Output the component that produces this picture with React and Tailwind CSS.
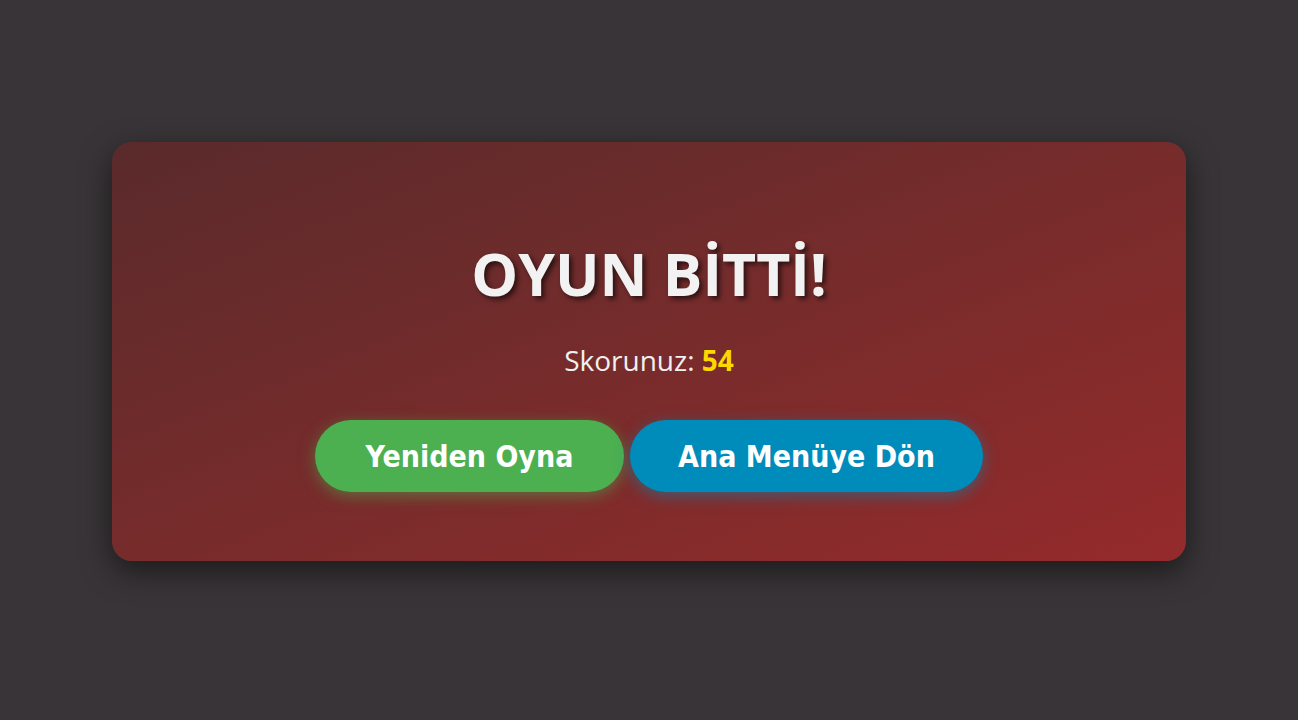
export default function App() {
  return (
    <div className="flex h-[720px] w-full justify-center bg-[#383437] pt-[142px] font-['Open_Sans',sans-serif]">
      <div className="flex h-[419px] w-[1074px] flex-col items-center rounded-[20px] bg-gradient-to-br from-[#5a2a2b] to-[#952a2b] pt-[102px] shadow-[0_10px_30px_rgba(0,0,0,0.5)]">
        <h1 className="text-[59px] font-bold leading-none text-[#f2f2f2] [text-shadow:3px_3px_5px_rgba(0,0,0,0.6)]">
          OYUN BİTTİ!
        </h1>
        <p className="mt-[43px] text-[28px] leading-none text-[#f0f0f0]">
          Skorunuz: <span className="font-bold text-[#ffd700]">54</span>
        </p>
        <div className="mt-[46px] flex gap-[6px] font-['DejaVu_Sans_Condensed','DejaVu_Sans',sans-serif]">
          <button className="h-[72px] w-[309px] rounded-full bg-[#4caf50] text-[30px] font-bold text-white shadow-[0_4px_15px_rgba(76,175,80,0.5)]">
            Yeniden Oyna
          </button>
          <button className="h-[72px] w-[353px] rounded-full bg-[#008cba] text-[30px] font-bold text-white shadow-[0_4px_15px_rgba(0,140,186,0.5)]">
            Ana Menüye Dön
          </button>
        </div>
      </div>
    </div>
  );
}
